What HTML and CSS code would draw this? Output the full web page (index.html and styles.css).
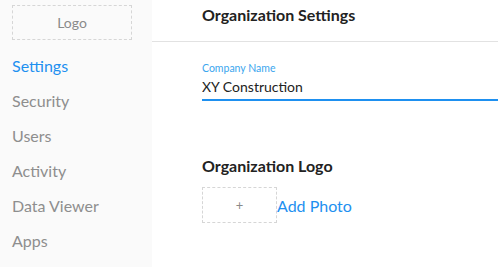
FILE: index.html
```html
<!DOCTYPE html>
<html lang="en">
<head>
    <meta charset="UTF-8">
    <meta name="viewport" content="width=device-width, initial-scale=1.0">
    <title>Organization Settings</title>
    <link rel="stylesheet" href="styles.css">
</head>
<body>
    <div class="layout">
        <aside class="sidebar">
            <div class="logo-box">Logo</div>
            <nav class="nav">
                <a class="nav-item active" href="#">Settings</a>
                <a class="nav-item" href="#">Security</a>
                <a class="nav-item" href="#">Users</a>
                <a class="nav-item" href="#">Activity</a>
                <a class="nav-item" href="#">Data Viewer</a>
                <a class="nav-item" href="#">Apps</a>
            </nav>
        </aside>

        <main class="content">
            <header class="page-header">
                <h1>Organization Settings</h1>
            </header>

            <section class="section">
                <label class="field">
                    <span class="field-label">Company Name</span>
                    <input class="field-input" type="text" value="XY Construction">
                </label>
            </section>

            <section class="section logo-section">
                <h2>Organization Logo</h2>
                <div class="photo-row">
                    <div class="photo-box">+</div>
                    <a class="add-photo" href="#">Add Photo</a>
                </div>
            </section>
        </main>
    </div>
</body>
</html>
```

FILE: styles.css
```css
* {
    margin: 0;
    padding: 0;
    box-sizing: border-box;
}

body {
    font-family: 'Lato', 'Liberation Sans', sans-serif;
    background: #fff;
    color: #222;
    height: 100vh;
    overflow: hidden;
}

.layout {
    display: flex;
    height: 100%;
}

.sidebar {
    width: 152px;
    flex-shrink: 0;
    background: #fafafa;
    padding: 5px 0 0 12px;
}

.logo-box {
    width: 120px;
    height: 35px;
    border: 1px dashed #d6d6d6;
    display: flex;
    align-items: center;
    justify-content: center;
    color: #8a8a8a;
    font-size: 14px;
}

.nav {
    display: flex;
    flex-direction: column;
    margin-top: 13px;
}

.nav-item {
    height: 35px;
    line-height: 26px;
    font-size: 16px;
    color: #8e8e8e;
    text-decoration: none;
}

.nav-item.active {
    color: #1e90f0;
}

.content {
    flex: 1;
}

.page-header {
    height: 42px;
    border-bottom: 1px solid #e2e2e2;
    padding: 5px 0 0 50px;
}

h1 {
    font-size: 16px;
    font-weight: 700;
    line-height: 19px;
    color: #222;
}

.section {
    padding-left: 50px;
}

.field {
    display: flex;
    flex-direction: column;
    margin-top: 20px;
}

.field-label {
    font-size: 10.5px;
    line-height: 12px;
    color: #3ba6ee;
}

.field-input {
    font-family: inherit;
    font-size: 14px;
    line-height: 16px;
    color: #222;
    border: none;
    border-bottom: 2px solid #1e90f0;
    background: transparent;
    height: 27px;
    padding: 4px 0 5px;
    outline: none;
    width: 100%;
}

.logo-section {
    margin-top: 55px;
}

h2 {
    font-size: 16px;
    font-weight: 700;
    line-height: 19px;
    color: #222;
}

.photo-row {
    display: flex;
    align-items: center;
    margin-top: 12px;
}

.photo-box {
    width: 75px;
    height: 36px;
    border: 1px dashed #d6d6d6;
    display: flex;
    align-items: center;
    justify-content: center;
    color: #8a8a8a;
    font-size: 13px;
}

.add-photo {
    font-size: 16px;
    color: #1e90f0;
    text-decoration: none;
}
```
